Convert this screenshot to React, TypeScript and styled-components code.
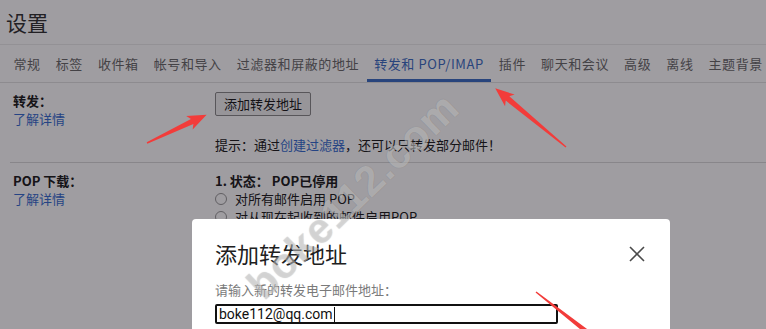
import React from 'react'
import styled, { createGlobalStyle } from 'styled-components'

const GlobalStyle = createGlobalStyle`
  html, body {
    margin: 0;
    padding: 0;
    background: #fff;
  }
  body {
    font-family: "Noto Sans CJK SC", "Noto Sans", sans-serif;
    overflow: hidden;
  }
`

const tabs = [
  '常规',
  '标签',
  '收件箱',
  '帐号和导入',
  '过滤器和屏蔽的地址',
  '转发和 POP/IMAP',
  '插件',
  '聊天和会议',
  '高级',
  '离线',
  '主题背景',
]

const arrows = [
  { x: 147, y: 143, angle: -25.4, length: 66 },
  { x: 566, y: 147, angle: -140.3, length: 92 },
  { x: 536, y: 292, angle: 38, length: 100 },
]

const Arrow = ({ x, y, angle, length }: { x: number; y: number; angle: number; length: number }) => {
  const L = length
  const points = `0,-0.7 ${L - 16},-2.8 ${L - 19},-7.5 ${L},0 ${L - 19},7.5 ${L - 16},2.8 0,0.7`
  return <polygon points={points} fill="#f23c3a" transform={`translate(${x} ${y}) rotate(${angle})`} />
}

export default function App() {
  return (
    <Page>
      <GlobalStyle />
      <Header>设置</Header>
      <TabBar>
        {tabs.map((t, i) => (
          <Tab key={t} $active={i === 5}>
            {t}
          </Tab>
        ))}
      </TabBar>

      <Section>
        <LabelCol>
          <Label>转发：</Label>
          <Link>了解详情</Link>
        </LabelCol>
        <Content>
          <Button>添加转发地址</Button>
          <Hint>
            提示：通过<InlineLink>创建过滤器</InlineLink>，还可以只转发部分邮件！
          </Hint>
        </Content>
      </Section>

      <Section $last>
        <LabelCol>
          <Label>POP 下载：</Label>
          <Link>了解详情</Link>
        </LabelCol>
        <Content>
          <Status>1. 状态： POP已停用</Status>
          <RadioRow>
            <Radio />
            对所有邮件启用 POP
          </RadioRow>
          <RadioRow>
            <Radio />
            对从现在起收到的邮件启用POP
          </RadioRow>
        </Content>
      </Section>

      <Overlay />

      <Dialog>
        <DialogHead>
          <DialogTitle>添加转发地址</DialogTitle>
          <CloseIcon width="16" height="16" viewBox="0 0 16 16">
            <path d="M1 1 L15 15 M15 1 L1 15" stroke="#4a4a4a" strokeWidth="1.6" fill="none" />
          </CloseIcon>
        </DialogHead>
        <FieldLabel>请输入新的转发电子邮件地址：</FieldLabel>
        <Field>
          boke112@qq.com
          <Caret />
        </Field>
      </Dialog>

      <Watermark>boke112.com</Watermark>

      <ArrowLayer width="766" height="329" viewBox="0 0 766 329">
        {arrows.map((a, i) => (
          <Arrow key={i} {...a} />
        ))}
      </ArrowLayer>
    </Page>
  )
}

const Page = styled.div`
  position: relative;
  width: 766px;
  height: 329px;
  overflow: hidden;
  background: #fff;
`

const Header = styled.div`
  height: 44px;
  display: flex;
  align-items: center;
  padding-left: 6px;
  font-size: 21px;
  color: #353535;
`

const TabBar = styled.div`
  display: flex;
  height: 37px;
  padding-left: 6px;
  border-top: 1px solid #ececec;
  border-bottom: 1px solid #e2e2e2;
`

const Tab = styled.div<{ $active?: boolean }>`
  display: flex;
  align-items: center;
  padding: 3px 7.5px 0;
  font-size: 13px;
  letter-spacing: 0.6px;
  white-space: nowrap;
  color: ${(p) => (p.$active ? '#3f6fc4' : '#6c6c6c')};
  border-bottom: 3px solid ${(p) => (p.$active ? '#3f6fc4' : 'transparent')};
  box-sizing: border-box;
`

const Section = styled.div<{ $last?: boolean }>`
  display: grid;
  grid-template-columns: 205px 1fr;
  margin-left: 10px;
  padding: 9px 0 8px;
  border-bottom: 1px solid ${(p) => (p.$last ? 'transparent' : '#dadada')};
`

const LabelCol = styled.div`
  display: flex;
  flex-direction: column;
  padding-left: 3px;
  font-size: 13px;
  line-height: 18px;
`

const Label = styled.div`
  font-weight: bold;
  color: #222;
`

const Link = styled.div`
  color: #3a6fd0;
`

const InlineLink = styled.span`
  color: #3a6fd0;
`

const Content = styled.div`
  display: flex;
  flex-direction: column;
  align-items: flex-start;
  font-size: 13px;
  line-height: 18px;
  color: #222;
`

const Button = styled.div`
  height: 24px;
  box-sizing: border-box;
  padding: 0 8px;
  display: flex;
  align-items: center;
  border: 1px solid #8c8c8c;
  border-radius: 2px;
  background: #f3f3f3;
  font-size: 13px;
  color: #1e1e1e;
  margin-bottom: 20px;
`

const Hint = styled.div`
  white-space: nowrap;
`

const Status = styled.div`
  font-weight: bold;
`

const RadioRow = styled.div`
  display: flex;
  align-items: center;
  gap: 8px;
  white-space: nowrap;
`

const Radio = styled.span`
  width: 10px;
  height: 10px;
  border: 1px solid #9a9a9a;
  border-radius: 50%;
  background: #fff;
`

const Overlay = styled.div`
  position: absolute;
  inset: 0;
  background: rgba(6, 0, 10, 0.385);
`

const Dialog = styled.div`
  position: absolute;
  left: 192px;
  top: 219px;
  width: 478px;
  height: 140px;
  box-sizing: border-box;
  padding: 20px 25px 0 23px;
  background: #fff;
  border-radius: 4px;
`

const DialogHead = styled.div`
  display: flex;
  justify-content: space-between;
  align-items: center;
  height: 28px;
`

const DialogTitle = styled.div`
  font-size: 22px;
  color: #202020;
`

const CloseIcon = styled.svg`
  display: block;
  margin-top: 2px;
`

const FieldLabel = styled.div`
  margin-top: 14px;
  font-size: 13px;
  line-height: 18px;
  color: #7a7a7a;
`

const Field = styled.div`
  margin-top: 5px;
  width: 343px;
  height: 20px;
  box-sizing: border-box;
  border: 2px solid #111;
  border-radius: 2px;
  display: flex;
  align-items: center;
  padding-left: 2px;
  font-family: Roboto, "Noto Sans", sans-serif;
  font-size: 14px;
  color: #111;
`

const Caret = styled.span`
  width: 1px;
  height: 15px;
  margin-left: 1px;
  background: #111;
`

const Watermark = styled.div`
  position: absolute;
  left: 353px;
  top: 196px;
  transform: translate(-50%, -50%) rotate(-44deg);
  font-family: "Liberation Sans", Arial, sans-serif;
  font-size: 42px;
  font-weight: bold;
  letter-spacing: 1px;
  white-space: nowrap;
  color: rgba(212, 212, 212, 0.5);
  text-shadow: 0 0 1px rgba(0, 0, 0, 0.18);
  pointer-events: none;
`

const ArrowLayer = styled.svg`
  position: absolute;
  left: 0;
  top: 0;
  pointer-events: none;
`
